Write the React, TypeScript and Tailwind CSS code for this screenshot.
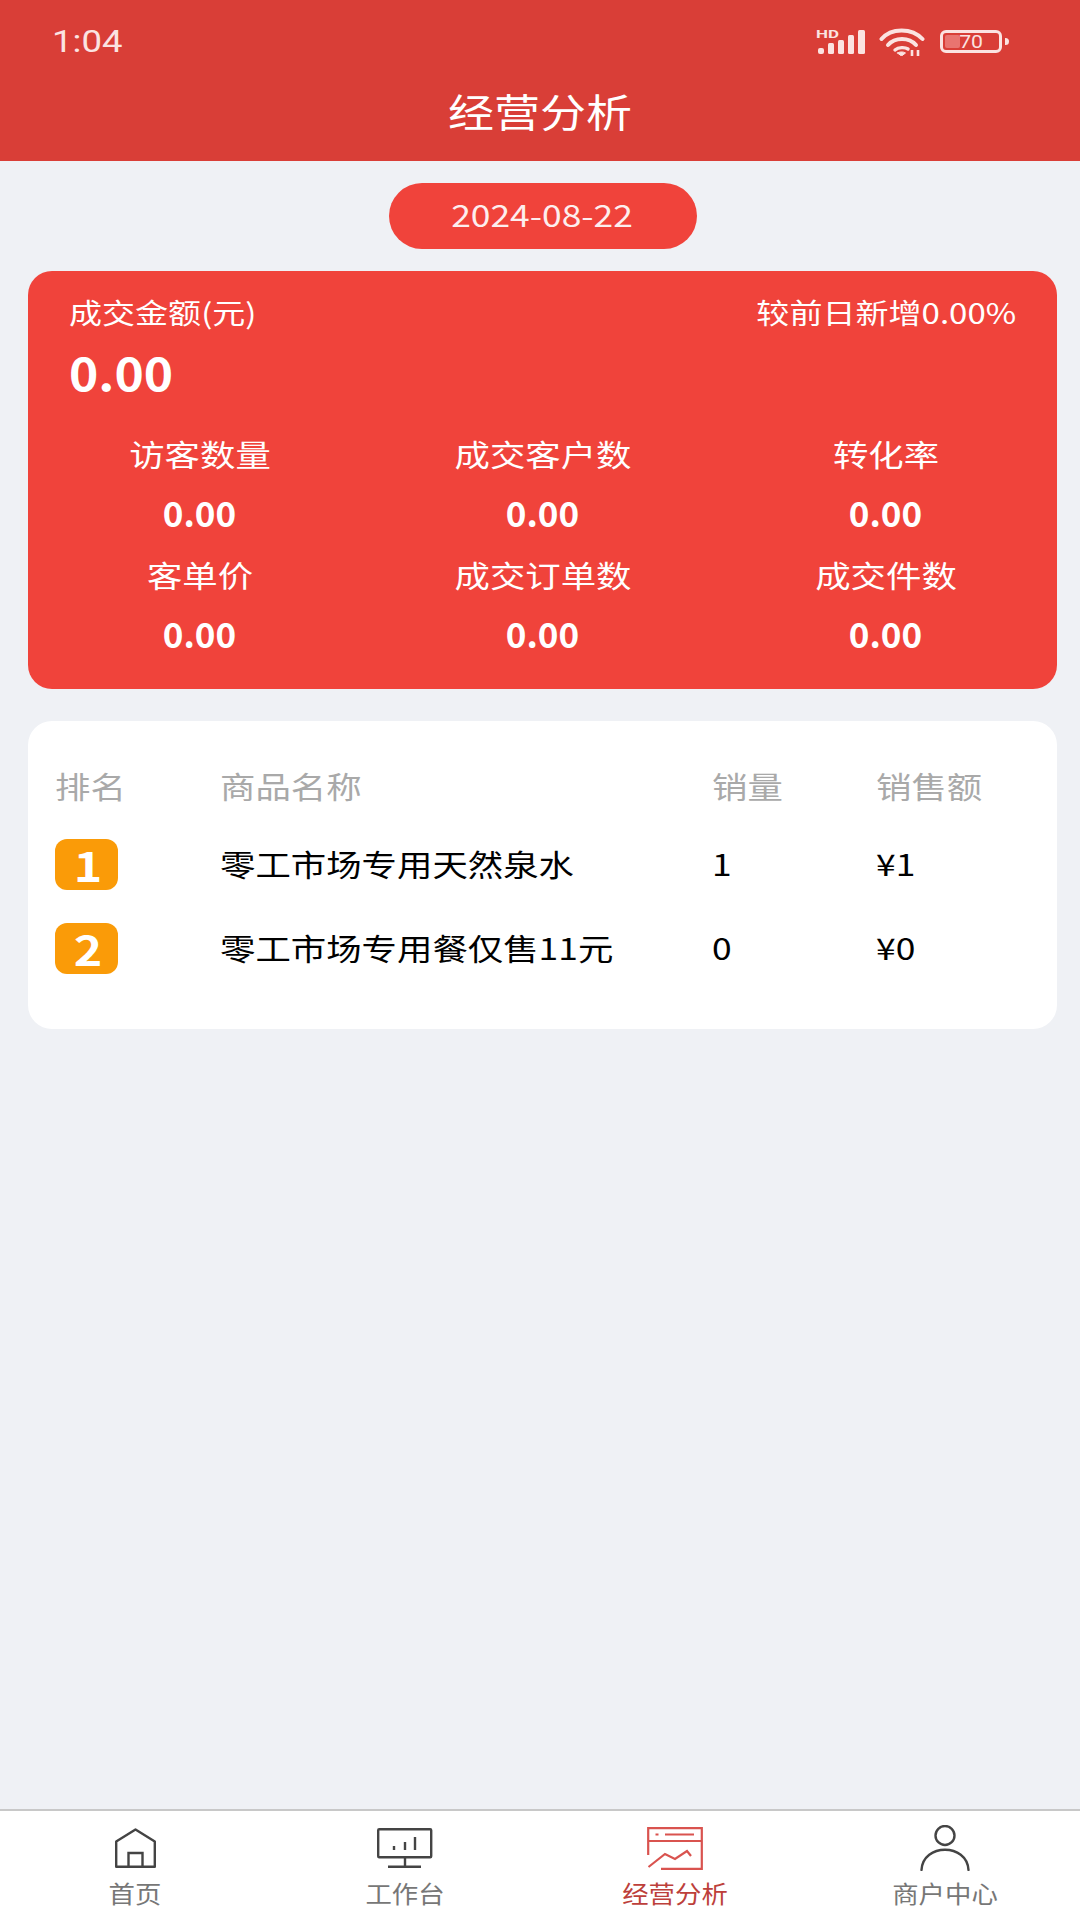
import React from 'react';

const font = { fontFamily: '"Noto Sans CJK SC", Roboto, sans-serif' };

const stats = [
  { label: '访客数量', value: '0.00' },
  { label: '成交客户数', value: '0.00' },
  { label: '转化率', value: '0.00' },
  { label: '客单价', value: '0.00' },
  { label: '成交订单数', value: '0.00' },
  { label: '成交件数', value: '0.00' },
];

const rows = [
  { rank: '1', name: '零工市场专用天然泉水', qty: '1', amount: '¥1' },
  { rank: '2', name: '零工市场专用餐仅售11元', qty: '0', amount: '¥0' },
];

// the screenshot is stretched sideways, so text gets widened the same way
const Wide = ({ children, className = '' }: { children: React.ReactNode; className?: string }) => (
  <span className={`inline-block whitespace-nowrap scale-x-[1.18] ${className}`}>{children}</span>
);

const StatusIcons = () => (
  <div className="flex items-center">
    <svg width="50" height="24" viewBox="0 0 50 24" className="overflow-visible text-[#fbe3e1]">
      <text x="0" y="8" fontSize="11" fontWeight="700" fill="currentColor" fontFamily="Roboto, sans-serif" textLength="23" lengthAdjust="spacingAndGlyphs">HD</text>
      <rect x="2" y="18" width="6" height="6" rx="2" fill="currentColor" />
      <rect x="12" y="13" width="6" height="11" rx="1.5" fill="currentColor" />
      <rect x="22" y="10" width="6" height="14" rx="1.5" fill="currentColor" />
      <rect x="32" y="5" width="6" height="19" rx="1.5" fill="currentColor" />
      <rect x="42" y="0" width="7" height="24" rx="1.5" fill="currentColor" />
    </svg>
    <svg width="46" height="28" viewBox="0 0 46 28" fill="none" stroke="#fbe3e1" strokeWidth="4" strokeLinecap="round" className="ml-[13px]">
      <path d="M2.5 11C12 -0.5 33 -0.5 43.5 11" />
      <path d="M9 17C16 9 30 9 37 17" />
      <path d="M16 22C19.5 19 26 19 29 21" strokeWidth="3.4" />
      <path d="M18.5 25L22.5 28L26.5 25C24 23.5 21 23.5 18.5 25Z" fill="#fbe3e1" strokeWidth="1" />
      <path d="M33 22V28M39 28V22" strokeWidth="2.6" strokeLinecap="butt" />
    </svg>
    <div className="ml-[15px] flex items-center gap-[3px]">
      <div className="relative flex h-[23px] w-[62px] items-center rounded-[6px] border-[3px] border-[#fbe3e1] p-[2px]">
        <div className="h-full w-[15px] rounded-[2px] bg-[#e97470]" />
        <span className="absolute inset-0 flex items-center justify-center text-[18px] leading-none text-[#fbe3e1]" style={{ fontFamily: 'Roboto, sans-serif' }}>
          <Wide>70</Wide>
        </span>
      </div>
      <div className="h-[7px] w-[4px] rounded-r-sm bg-[#fbe3e1]" />
    </div>
  </div>
);

const HomeIcon = () => (
  <svg width="41" height="40" viewBox="0 0 41 40" fill="none" stroke="#444" strokeWidth="2.4">
    <path d="M1.2 38.8V13.5L20.5 1.5L39.8 13.5V38.8Z" strokeLinejoin="round" />
    <path d="M13.5 38.8V25H27.5V38.8" />
  </svg>
);

const BoardIcon = () => (
  <svg width="56" height="40" viewBox="0 0 56 40" fill="none" stroke="#444" strokeWidth="2.4">
    <rect x="1.2" y="1.2" width="53" height="28" rx="1" />
    <path d="M28 29V38.5M11 38.8H44" />
    <path d="M17 18V22M28 14V22M38 9V22" />
  </svg>
);

const ChartIcon = () => (
  <svg width="56" height="43" viewBox="0 0 56 43" fill="none" stroke="#d9534f" strokeWidth="2.2">
    <path d="M1.2 28V1.2H54.8V41.8H14" />
    <path d="M1.2 14H54.8" />
    <path d="M8.5 7.5H11.5M18 7.5H47" />
    <path d="M1.5 40L18 27L28 32L40 24L44 29" />
  </svg>
);

const UserIcon = () => (
  <svg width="50" height="46" viewBox="0 0 50 46" fill="none" stroke="#444" strokeWidth="2.4">
    <circle cx="25" cy="10.5" r="9.5" />
    <path d="M1.5 45C3 18 47 18 48.5 45" strokeLinecap="round" />
  </svg>
);

const tabs = [
  { label: '首页', icon: <HomeIcon />, active: false },
  { label: '工作台', icon: <BoardIcon />, active: false },
  { label: '经营分析', icon: <ChartIcon />, active: true },
  { label: '商户中心', icon: <UserIcon />, active: false },
];

export default function App() {
  return (
    <div className="flex h-[1920px] w-[1080px] flex-col overflow-hidden bg-[#eff1f5]" style={font}>
      {/* Header */}
      <div className="flex h-[161px] shrink-0 flex-col bg-[#d93e37] px-[52px] text-white">
        <div className="flex h-[82px] items-center justify-between pr-[19px] pt-[1px]">
          <span className="text-[31px] leading-none text-[#fbe3e1]" style={{ fontFamily: 'Roboto, sans-serif' }}>
            <Wide className="origin-left">1:04</Wide>
          </span>
          <StatusIcons />
        </div>
        <div className="text-center text-[39px] leading-[56px]">
          <Wide>经营分析</Wide>
        </div>
      </div>

      <div className="flex flex-1 flex-col pl-[28px] pr-[23px]">
        {/* Date */}
        <div className="mt-[22px] flex justify-center">
          <div className="flex h-[66px] w-[308px] items-center justify-center rounded-full bg-[#f0433b] pb-[3px] text-[30px] text-[#fdeeee]">
            <Wide>2024-08-22</Wide>
          </div>
        </div>

        {/* Summary card */}
        <div className="mt-[22px] h-[418px] rounded-[24px] bg-[#f0433b] text-white">
          <div className="flex items-center justify-between px-[41px] pt-[22px] text-[28px] leading-[38px]">
            <Wide className="origin-left">成交金额(元)</Wide>
            <Wide className="origin-right">较前日新增0.00%</Wide>
          </div>
          <div className="px-[41px] pt-[15px] text-[46px] font-bold leading-[50px]">
            <span className="inline-block origin-left scale-x-[1.08]">0.00</span>
          </div>
          <div className="mt-[36px] grid grid-cols-3 gap-y-[19px] text-center">
            {stats.map((s) => (
              <div key={s.label}>
                <div className="text-[30px] leading-[42px]"><Wide>{s.label}</Wide></div>
                <div className="mt-[16px] text-[35px] font-bold leading-[44px]">{s.value}</div>
              </div>
            ))}
          </div>
        </div>

        {/* Ranking */}
        <div className="mt-[32px] h-[308px] rounded-[24px] bg-white pl-[27px] pt-[42px]">
          <div className="flex h-[44px] items-center text-[30px] text-[#a9a9a9]">
            <div className="w-[165px]"><Wide className="origin-left">排名</Wide></div>
            <div className="w-[492px]"><Wide className="origin-left">商品名称</Wide></div>
            <div className="w-[164px]"><Wide className="origin-left">销量</Wide></div>
            <div><Wide className="origin-left">销售额</Wide></div>
          </div>
          <div className="mt-[32px] flex flex-col gap-[33px]">
            {rows.map((r) => (
              <div key={r.rank} className="flex h-[51px] items-center text-[30px] text-black">
                <div className="w-[165px]">
                  <div className="flex h-[51px] w-[63px] items-center justify-center rounded-[12px] bg-[#fa9b08] pl-[3px] text-[41px] font-bold leading-none text-white">
                    <Wide>{r.rank}</Wide>
                  </div>
                </div>
                <div className="w-[492px] pb-[2px]"><Wide className="origin-left">{r.name}</Wide></div>
                <div className="w-[164px] pb-[2px]"><Wide className="origin-left">{r.qty}</Wide></div>
                <div className="pb-[2px]"><Wide className="origin-left">{r.amount}</Wide></div>
              </div>
            ))}
          </div>
        </div>
      </div>

      {/* Tab bar */}
      <div className="grid h-[111px] shrink-0 grid-cols-4 border-t-[2px] border-[#c8c8c8] bg-white">
        {tabs.map((t) => (
          <div key={t.label} className="flex flex-col items-center pt-[13px]">
            <div className="flex h-[48px] items-center justify-center">{t.icon}</div>
            <span className={`mt-[4px] inline-block scale-x-[1.1] text-[24px] leading-[34px] ${t.active ? 'text-[#bd3f3b]' : 'text-[#777777]'}`}>
              {t.label}
            </span>
          </div>
        ))}
      </div>
    </div>
  );
}
